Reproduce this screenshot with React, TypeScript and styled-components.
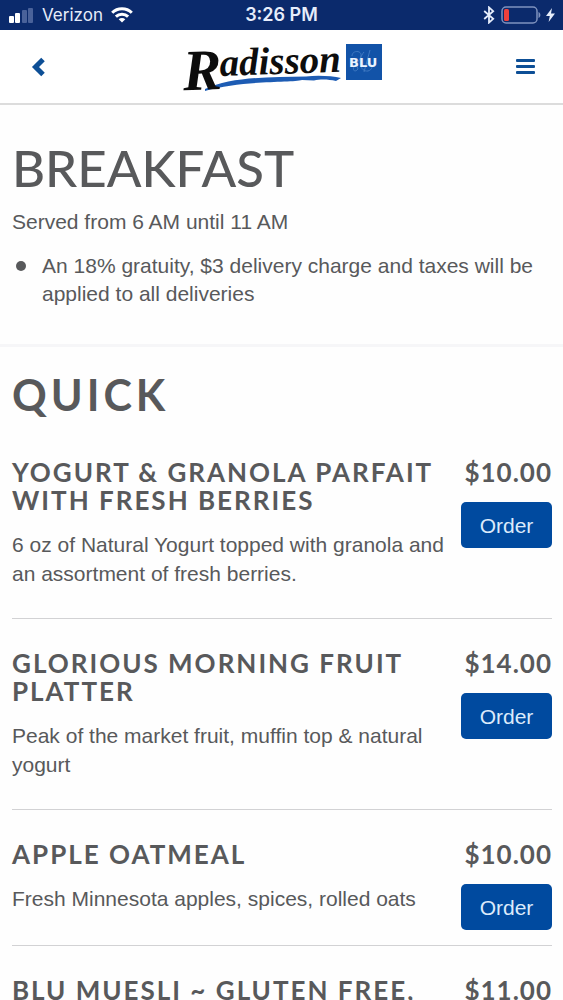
import React from "react";
import styled, { createGlobalStyle } from "styled-components";

const GlobalStyle = createGlobalStyle`
  * { box-sizing: border-box; }
  body {
    margin: 0;
    background: #fefefe;
    color: #58595b;
    font-family: "Liberation Sans", Arial, sans-serif;
    font-size: 21px;
    line-height: 29px;
  }
  h1, h2, h3, p, ul { margin: 0; }
`;

const StatusBar = styled.div`
  display: grid;
  grid-template-columns: 1fr auto 1fr;
  align-items: center;
  height: 30px;
  padding: 0 8px;
  background: #0b2a6c;
  color: #e6edfb;
  font-family: Inter, sans-serif;
  font-size: 18px;
  line-height: 30px;
`;

const StatusGroup = styled.div<{ $end?: boolean }>`
  display: flex;
  align-items: center;
  justify-content: ${(p) => (p.$end ? "flex-end" : "flex-start")};
  gap: ${(p) => (p.$end ? "5px" : "8px")};
`;

const Carrier = styled.span`
  font-size: 17px;
`;

const Clock = styled.time`
  font-weight: 600;
`;

const Header = styled.header`
  display: flex;
  align-items: center;
  justify-content: space-between;
  height: 75px;
  padding: 0 20px;
  background: #fff;
  border-bottom: 2px solid #dcdcdc;
`;

const IconButton = styled.button`
  display: flex;
  align-items: center;
  justify-content: center;
  width: 36px;
  height: 44px;
  padding: 0;
  border: 0;
  background: none;
  color: #0d4f96;
  cursor: pointer;
`;

const LogoLink = styled.a`
  display: block;
  height: 62px;

  svg {
    display: block;
    overflow: visible;
  }
`;

const Intro = styled.section`
  padding: 32px 12px 36px;
  border-bottom: 3px solid #f6f6f8;
  line-height: 28px;
`;

const PageTitle = styled.h1`
  font-family: Lato, sans-serif;
  font-weight: 500;
  font-size: 51px;
  line-height: 62px;
`;

const Served = styled.p`
  padding-top: 9px;
`;

const Notes = styled.ul`
  padding: 16px 0 0 4px;
  list-style: none;
`;

const Note = styled.li`
  display: flex;
  gap: 16px;

  &::before {
    content: "";
    flex: none;
    width: 10px;
    height: 10px;
    margin-top: 9px;
    border-radius: 50%;
    background: currentColor;
  }
`;

const Menu = styled.section`
  padding: 0 11px 0 12px;
`;

const SectionTitle = styled.h2`
  padding: 21px 0 6px;
  font-family: Lato, sans-serif;
  font-weight: 700;
  font-size: 43px;
  line-height: 54px;
  letter-spacing: 4px;
`;

const Item = styled.article`
  display: grid;
  grid-template-columns: 1fr auto;
  column-gap: 12px;
  padding: 30px 0 15px;
  border-bottom: 1px solid #d2d2d4;
`;

const Details = styled.div`
  padding-bottom: 15px;
`;

const ItemTitle = styled.h3`
  font-family: Lato, sans-serif;
  font-weight: 700;
  font-size: 26px;
  line-height: 28px;
  letter-spacing: 2px;
`;

const Description = styled.p`
  padding-top: 16px;
`;

const Purchase = styled.div`
  display: flex;
  flex-direction: column;
  align-items: flex-end;
  gap: 16px;
`;

const Price = styled.span`
  font-family: Lato, sans-serif;
  font-weight: 700;
  font-size: 26px;
  line-height: 28px;
  letter-spacing: 1px;
`;

const OrderButton = styled.button`
  width: 91px;
  height: 46px;
  padding: 0;
  border: 0;
  border-radius: 5px;
  background: #004a9f;
  color: #dcebfb;
  font: inherit;
  cursor: pointer;
`;

const SignalIcon = () => (
  <svg width="26" height="16" viewBox="0 0 26 16" aria-hidden="true">
    <rect x="1" y="9" width="5" height="7" rx="1" fill="#fff" />
    <rect x="7" y="6" width="5" height="10" rx="1" fill="#fff" />
    <rect x="14" y="3" width="5" height="13" rx="1" fill="#4a629a" />
    <rect x="20" y="1" width="5" height="15" rx="1" fill="#4a629a" />
  </svg>
);

const WifiIcon = () => (
  <svg width="22" height="16" viewBox="0 0 22 16" fill="none" stroke="#fff" strokeWidth="3" aria-hidden="true">
    <path d="M1.2 5.8C6.5 0.4 15.5 0.4 20.8 5.8" />
    <path d="M4.9 9.6C8.2 6.3 13.8 6.3 17.1 9.6" />
    <path d="M11 15.6L7.7 12.3C9.6 10.6 12.4 10.6 14.3 12.3Z" fill="#fff" stroke="none" />
  </svg>
);

const BluetoothIcon = () => (
  <svg width="12" height="18" viewBox="0 0 12 18" fill="none" stroke="#e6edfb" strokeWidth="1.8" aria-hidden="true">
    <path d="M1.2 5L10.2 12.8L6 16.6V1.4L10.2 5.2L1.2 13" />
  </svg>
);

const BatteryIcon = () => (
  <svg width="41" height="18" viewBox="0 0 41 18" aria-hidden="true">
    <rect x="2" y="1" width="35" height="16" rx="4" fill="none" stroke="#7f92be" strokeWidth="1.5" />
    <rect x="4" y="3" width="5" height="12" rx="1.5" fill="#f0403c" />
    <path d="M38.5 6C41 7 41 11 38.5 12Z" fill="#7f92be" />
  </svg>
);

const BoltIcon = () => (
  <svg width="9" height="14" viewBox="0 0 9 14" aria-hidden="true">
    <path d="M6 0L0 8H3.8L2.6 14L9 5.6H5Z" fill="#e6edfb" />
  </svg>
);

const BackIcon = () => (
  <svg width="14" height="20" viewBox="0 0 14 20" fill="none" stroke="currentColor" strokeWidth="5" aria-hidden="true">
    <path d="M12 2.5L4.5 10L12 17.5" />
  </svg>
);

const MenuIcon = () => (
  <svg width="19" height="17" viewBox="0 0 19 17" fill="currentColor" aria-hidden="true">
    <rect y="1" width="19" height="3" rx="1" />
    <rect y="7" width="19" height="3" rx="1" />
    <rect y="13" width="19" height="3" rx="1" />
  </svg>
);

const Logo = () => (
  <svg width="200" height="62" viewBox="0 0 200 62" role="img" aria-label="Radisson Blu">
    <path
      d="M23 53C48 41 86 41 124 40.5C136 39 150 40 159 42L154 45C146 43 138 43 132 44.5L120 44C110 47 60 44 23 55Z"
      fill="#1d5cb4"
    />
    <g
      fill="#0d0d0d"
      fontFamily="'Liberation Serif', serif"
      fontStyle="italic"
      fontWeight="700"
      transform="rotate(-2 36 41)"
    >
      <text x="1" y="53" fontSize="58">R</text>
      <text x="38" y="40" fontSize="39">adisson</text>
    </g>
    <rect x="164" y="8" width="36" height="36" fill="#1253a8" />
    <g fill="none" stroke="#3f79c2" strokeWidth="1">
      <path d="M170 20C170 14 180 14 179 20C178 25 173 26 176 33C172 38 169 32 174 29" />
      <path d="M182 16C175 24 178 36 186 35C193 33 190 24 184 28M188 14L182 36" />
    </g>
    <text x="167" y="31" fontSize="13" fontWeight="700" fontFamily="'DejaVu Sans', sans-serif" fill="#eaf3ff">
      BLU
    </text>
  </svg>
);

const ITEMS = [
  {
    name: "YOGURT & GRANOLA PARFAIT WITH FRESH BERRIES",
    text: "6 oz of Natural Yogurt topped with granola and an assortment of fresh berries.",
    price: "$10.00",
  },
  {
    name: "GLORIOUS MORNING FRUIT PLATTER",
    text: "Peak of the market fruit, muffin top & natural yogurt",
    price: "$14.00",
  },
  { name: "APPLE OATMEAL", text: "Fresh Minnesota apples, spices, rolled oats", price: "$10.00" },
  { name: "BLU MUESLI ~ GLUTEN FREE,", text: "", price: "$11.00" },
];

export default function App() {
  return (
    <>
      <GlobalStyle />
      <StatusBar>
        <StatusGroup>
          <SignalIcon />
          <Carrier>Verizon</Carrier>
          <WifiIcon />
        </StatusGroup>
        <Clock>3:26 PM</Clock>
        <StatusGroup $end>
          <BluetoothIcon />
          <BatteryIcon />
          <BoltIcon />
        </StatusGroup>
      </StatusBar>
      <Header>
        <IconButton aria-label="Back">
          <BackIcon />
        </IconButton>
        <LogoLink href="#" aria-label="Radisson Blu home">
          <Logo />
        </LogoLink>
        <IconButton aria-label="Menu">
          <MenuIcon />
        </IconButton>
      </Header>
      <main>
        <Intro>
          <PageTitle>BREAKFAST</PageTitle>
          <Served>Served from 6 AM until 11 AM</Served>
          <Notes>
            <Note>An 18% gratuity, $3 delivery charge and taxes will be applied to all deliveries</Note>
          </Notes>
        </Intro>
        <Menu>
          <SectionTitle>QUICK</SectionTitle>
          {ITEMS.map((item) => (
            <Item key={item.name}>
              <Details>
                <ItemTitle>{item.name}</ItemTitle>
                {item.text && <Description>{item.text}</Description>}
              </Details>
              <Purchase>
                <Price>{item.price}</Price>
                <OrderButton>Order</OrderButton>
              </Purchase>
            </Item>
          ))}
        </Menu>
      </main>
    </>
  );
}
